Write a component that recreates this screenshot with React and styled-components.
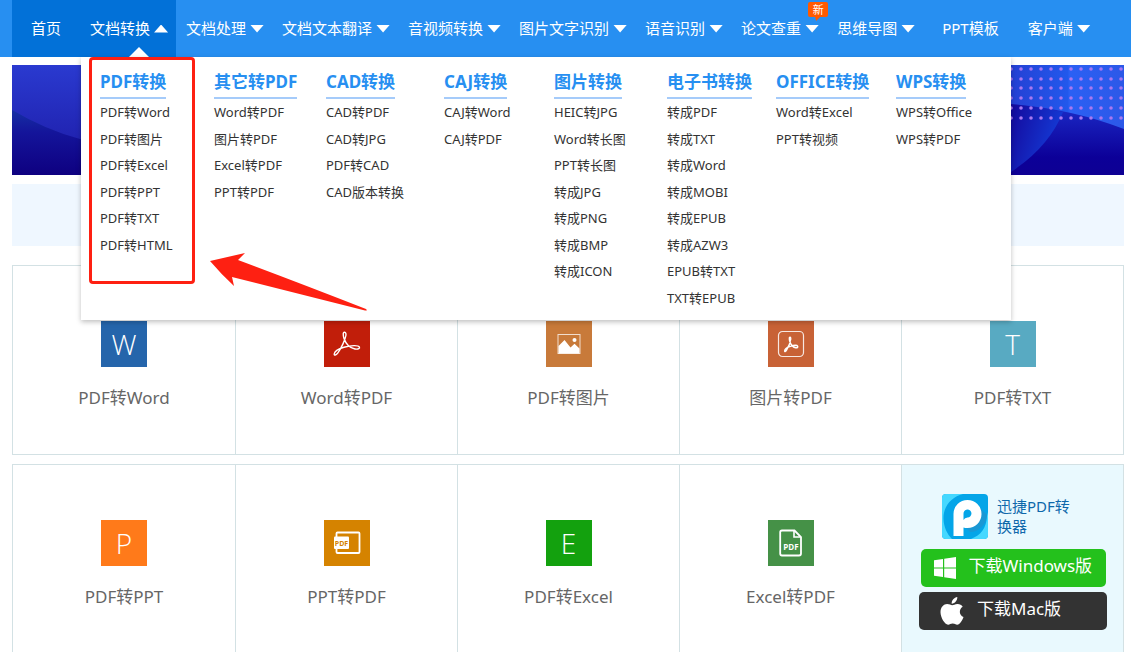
import React from 'react';
import styled, { createGlobalStyle } from 'styled-components';

const GlobalStyle = createGlobalStyle`
  *, *::before, *::after { box-sizing: border-box; }
  body {
    margin: 0;
    background: #fff;
    color: #333;
    font-family: "Noto Sans", "Noto Sans CJK SC", sans-serif;
  }
  ul { margin: 0; padding: 0; list-style: none; }
  a { color: inherit; text-decoration: none; }
  h2, p { margin: 0; }
`;

const Page = styled.div`
  position: relative;
  height: 100vh;
  overflow: hidden;
`;

const NavBar = styled.header`
  position: relative;
  height: 57px;
  padding: 0 7px 0 12px;
  background: #278ff1;
`;

const NavList = styled.ul`
  display: flex;
  height: 100%;
`;

const NavItem = styled.li`
  position: relative;
  flex: none;
  background: ${p => (p.$active ? '#0271d8' : 'transparent')};
`;

const NavLink = styled.a`
  display: flex;
  align-items: center;
  gap: 4px;
  height: 100%;
  padding: ${p => (p.$plain ? '0 19px 2px' : '0 8px 2px 10px')};
  color: #fff;
  font-size: 15px;
  line-height: 20px;
  white-space: nowrap;
`;

const Caret = styled.span`
  width: 14px;
  height: 8px;
  margin-top: 2px;
  background: #fff;
  clip-path: ${p => (p.$up ? 'polygon(50% 0, 100% 100%, 0 100%)' : 'polygon(0 0, 100% 0, 50% 100%)')};
`;

const Pointer = styled.span`
  position: absolute;
  left: 49px;
  bottom: 0;
  width: 20px;
  height: 10px;
  background: #fff;
  clip-path: polygon(50% 0, 100% 100%, 0 100%);
`;

const NewBadge = styled.span`
  position: absolute;
  top: 2px;
  right: -1px;
  width: 20px;
  height: 15px;
  border-radius: 2px;
  background: #ff5a00;
  color: #fff;
  font-size: 11px;
  line-height: 15px;
  text-align: center;

  &::after {
    content: "";
    position: absolute;
    left: 7px;
    top: 15px;
    width: 5px;
    height: 4px;
    background: #ff5a00;
    clip-path: polygon(0 0, 100% 0, 20% 100%);
  }
`;

const MegaMenu = styled.nav`
  position: absolute;
  z-index: 2;
  top: 57px;
  left: 81px;
  display: grid;
  grid-template-columns: 114px 112px 118px 110px 113px 109px 120px auto;
  width: 930px;
  padding: 12px 19px 9px;
  background: #fff;
  box-shadow: 0 2px 5px rgba(0, 0, 0, 0.25);
`;

const MenuTitle = styled.h2`
  width: max-content;
  height: 30px;
  border-bottom: 2px solid #a5cbfa;
  color: #278ff1;
  font-size: 17px;
  font-weight: 700;
  line-height: 26px;
`;

const MenuList = styled.ul`
  display: grid;
  grid-template-rows: repeat(8, 1fr);
  height: 212px;
  font-size: 13px;
`;

const MenuItem = styled.li`
  display: flex;
  align-items: center;
  line-height: 20px;
  white-space: nowrap;
`;

const Highlight = styled.div`
  position: absolute;
  top: 0;
  left: 8px;
  width: 106px;
  height: 227px;
  border: 3px solid #fe2012;
  border-radius: 4px;
  pointer-events: none;
`;

const Arrow = styled.svg`
  position: absolute;
  top: 193px;
  left: 128px;
  pointer-events: none;
`;

const Main = styled.main`
  padding: 8px 7px 0 12px;
`;

const Banner = styled.div`
  display: flex;
  justify-content: space-between;
  height: 110px;
  background: linear-gradient(#2634c8, #100080);
`;

const NoticeBar = styled.div`
  height: 62px;
  margin: 9px 0 19px;
  background: #eff7ff;
`;

const CardRow = styled.div`
  display: grid;
  grid-template-columns: repeat(5, 1fr);
  min-height: 190px;
  margin-bottom: 9px;
  border: 1px solid #d3e1e4;
`;

const Card = styled.a`
  display: flex;
  flex-direction: column;
  align-items: center;
  padding-top: 55px;
  color: #666;

  & + & { border-left: 1px solid #d3e1e4; }
`;

const Tile = styled.span`
  display: flex;
  align-items: center;
  justify-content: center;
  width: 46px;
  height: 46px;
  background: ${p => p.$color};
  color: #fff;
  font-family: "Open Sans", sans-serif;
  font-size: 28px;
  font-weight: 300;
  line-height: 44px;
`;

const CardLabel = styled.span`
  margin-top: 18px;
  font-size: 17px;
  line-height: 26px;
`;

const DownloadCard = styled.section`
  display: flex;
  flex-direction: column;
  align-items: center;
  gap: 5px;
  padding: 29px 16px 0 17px;
  border-left: 1px solid #d3e1e4;
  background: #e9f9fe;
`;

const Product = styled.div`
  display: flex;
  align-self: stretch;
  gap: 9px;
  padding: 0 24px 5px 23px;
`;

const ProductName = styled.p`
  flex: 1;
  padding-top: 2px;
  color: #0e68ab;
  font-size: 15px;
  line-height: 20px;
`;

const DownloadButton = styled.button`
  display: flex;
  align-items: center;
  gap: 13px;
  width: ${p => p.$width};
  height: 38px;
  padding: 0 0 0 ${p => p.$inset};
  border: 0;
  border-radius: 5px;
  background: ${p => p.$color};
  color: #fff;
  font: inherit;
  font-size: 17px;
  line-height: 24px;
  white-space: nowrap;

  span { padding-bottom: 4px; }
`;

const NAV = [
  { text: '首页', plain: true, active: true },
  { text: '文档转换', active: true, open: true },
  { text: '文档处理' },
  { text: '文档文本翻译' },
  { text: '音视频转换' },
  { text: '图片文字识别' },
  { text: '语音识别' },
  { text: '论文查重', badge: '新' },
  { text: '思维导图' },
  { text: 'PPT模板', plain: true },
  { text: '客户端' },
];

const MENU = [
  ['PDF转换', ['PDF转Word', 'PDF转图片', 'PDF转Excel', 'PDF转PPT', 'PDF转TXT', 'PDF转HTML']],
  ['其它转PDF', ['Word转PDF', '图片转PDF', 'Excel转PDF', 'PPT转PDF']],
  ['CAD转换', ['CAD转PDF', 'CAD转JPG', 'PDF转CAD', 'CAD版本转换']],
  ['CAJ转换', ['CAJ转Word', 'CAJ转PDF']],
  ['图片转换', ['HEIC转JPG', 'Word转长图', 'PPT转长图', '转成JPG', '转成PNG', '转成BMP', '转成ICON']],
  ['电子书转换', ['转成PDF', '转成TXT', '转成Word', '转成MOBI', '转成EPUB', '转成AZW3', 'EPUB转TXT', 'TXT转EPUB']],
  ['OFFICE转换', ['Word转Excel', 'PPT转视频']],
  ['WPS转换', ['WPS转Office', 'WPS转PDF']],
];

const AcrobatPath = ({ width }) => (
  <path
    d="M11.6 1.2C9.8 1 10 4.500 11 7.500C12.600 12 16.500 17 22 18C25.500 18.600 27 17.300 26.400 16C25.300 13.900 18 14.300 11 16.200C5.500 17.800 1.500 20.500 1.200 23C1.100 24.600 3 24.500 4.700 22.200C8.500 17 12.200 8.500 12.900 4.500C13.200 2.500 12.700 1.300 11.600 1.200Z"
    fill="none"
    stroke="#fff"
    strokeWidth={width}
    strokeLinejoin="round"
  />
);

const AcrobatIcon = () => (
  <svg width="28" height="26" viewBox="0 0 28 26" aria-hidden="true">
    <AcrobatPath width="1.4" />
  </svg>
);

const ImageIcon = () => (
  <svg width="24" height="24" viewBox="0 0 24 24" aria-hidden="true">
    <rect x="1" y="2.500" width="22" height="19" fill="none" stroke="#fff" strokeOpacity=".75" />
    <path d="M1.500 21.500V14L7.500 8L13.500 15.500L17.500 11.800L22.500 16.500V21.500Z" fill="#fff" />
    <circle cx="17.500" cy="8" r="2" fill="#fff" />
  </svg>
);

const FramedAcrobatIcon = () => (
  <svg width="28" height="28" viewBox="0 0 28 28" aria-hidden="true">
    <rect x="1.500" y="1.500" width="25" height="25" rx="4" fill="none" stroke="#fff" strokeOpacity=".85" strokeWidth="1.200" />
    <g transform="translate(7 6.500) scale(.52 .62)">
      <AcrobatPath width="2.600" />
    </g>
  </svg>
);

const SlidePdfIcon = () => (
  <svg width="28" height="26" viewBox="0 0 28 26" aria-hidden="true">
    <rect x="3.500" y="2.500" width="23" height="20.500" rx="1" fill="none" stroke="#fff" strokeWidth="1.800" />
    <rect x="1" y="6.500" width="15" height="12.500" rx="1" fill="#fff" />
    <text x="8.500" y="15.500" textAnchor="middle" fontFamily="Open Sans" fontSize="7" fontWeight="700" fill="#d58300">PDF</text>
  </svg>
);

const FilePdfIcon = () => (
  <svg width="24" height="28" viewBox="0 0 24 28" aria-hidden="true">
    <path d="M3 1.500H15.500L22 8V24.500Q22 26.500 20 26.500H3Q1.200 26.500 1.200 24.500V3.300Q1.200 1.500 3 1.500Z" fill="none" stroke="#fff" strokeWidth="1.800" />
    <path d="M15 2V8H21.500" fill="none" stroke="#fff" strokeWidth="1.600" />
    <text x="12" y="20.500" textAnchor="middle" fontFamily="Open Sans" fontSize="8" fontWeight="700" fill="#fff">PDF</text>
  </svg>
);

const ProductLogo = () => (
  <svg width="46" height="45" viewBox="0 0 46 45" aria-hidden="true">
    <defs>
      <clipPath id="logoClip"><rect width="46" height="45" rx="4" /></clipPath>
    </defs>
    <g clipPath="url(#logoClip)">
      <rect width="46" height="45" fill="#04a5e8" />
      <path d="M0 0H21C9 3 1 13 1.500 25C1.800 33 5 40 10 45H0Z" fill="#45d8ff" />
      <path d="M46 45H29C39 41 44.500 34 45 22L46 18Z" fill="#45d8ff" />
      <path d="M37 13L45 21C44 31 37 38 28 38L21 31Z" fill="#1a98d4" />
      <path d="M11.500 42V20A14 14 0 1 1 25.500 34Q23 34 21.500 33.500V42Z" fill="#fff" />
      <path d="M21.500 26V20A4 4 0 1 1 25.500 23.500Q22.800 23.500 21.500 26Z" fill="#04a5e8" />
    </g>
  </svg>
);

const WindowsLogo = () => (
  <svg width="22" height="22" viewBox="0 0 22 22" fill="#fff" aria-hidden="true">
    <path d="M0 3.200L9 1.900V10.400H0ZM10.200 1.700L22 0V10.400H10.200ZM0 11.600H9V20.100L0 18.800ZM10.200 11.600H22V22L10.200 20.300Z" />
  </svg>
);

const AppleLogo = () => (
  <svg width="24" height="28" viewBox="0 0 24 28" fill="#fff" aria-hidden="true">
    <path d="M17.300 0C17.500 3.400 14.800 6.600 11.700 6.700C11.300 3.500 14.300 .4 17.300 0Z" />
    <path d="M12.200 8.300C13.500 8.300 15.100 6.900 17.600 7C19.800 7.100 21.600 8.100 22.700 9.700C18.500 12.300 19.100 18.200 23.500 20C22.500 22.900 19.900 27.700 17.200 27.700C15.400 27.700 14.800 26.600 12.700 26.600C10.500 26.600 9.800 27.700 8.200 27.700C4.900 27.900 .5 20.500 .5 15.300C.5 10.100 3.800 7.200 7.100 7.100C9.300 7.100 11 8.300 12.200 8.300Z" />
  </svg>
);

const BannerLeft = () => (
  <svg width="120" height="110" viewBox="0 0 120 110" aria-hidden="true">
    <defs>
      <linearGradient id="leftTop" x1="0" y1="0" x2="0" y2="1">
        <stop offset="0" stopColor="#2a3ad0" />
        <stop offset="1" stopColor="#1c18a2" />
      </linearGradient>
      <linearGradient id="leftBottom" x1="0" y1="0" x2="0" y2="1">
        <stop offset="0" stopColor="#1530a4" />
        <stop offset=".35" stopColor="#14149a" />
        <stop offset="1" stopColor="#0e0080" />
      </linearGradient>
    </defs>
    <rect width="120" height="110" fill="url(#leftTop)" />
    <path d="M0 45Q34 65 68 74L120 84V110H0Z" fill="url(#leftBottom)" />
  </svg>
);

const dots = [];
for (let row = 0; row < 6; row += 1) {
  for (let col = 0; col < 12; col += 1) {
    dots.push([col * 10, 4 + row * 10 - (row > 1 ? 1 : 0)]);
  }
}

const BannerRight = () => (
  <svg width="113" height="110" viewBox="0 0 113 110" aria-hidden="true">
    <defs>
      <linearGradient id="rightTop" x1="0" y1="0" x2="1" y2="0">
        <stop offset="0" stopColor="#2440d4" />
        <stop offset=".5" stopColor="#2258ec" />
        <stop offset=".52" stopColor="#2b60f4" />
        <stop offset="1" stopColor="#2c58e8" />
      </linearGradient>
      <linearGradient id="rightBottom" x1="0" y1="0" x2="0" y2="1">
        <stop offset="0" stopColor="#1c2cc8" />
        <stop offset=".75" stopColor="#0c0098" />
        <stop offset="1" stopColor="#0e0094" />
      </linearGradient>
      <linearGradient id="wave" x1="0" y1=".2" x2="1" y2=".6">
        <stop offset="0" stopColor="#140ca0" />
        <stop offset="1" stopColor="#1440dc" />
      </linearGradient>
    </defs>
    <rect width="113" height="110" fill="url(#rightTop)" />
    <path d="M0 39Q62 44 113 64V110H0Z" fill="url(#rightBottom)" />
    <path d="M0 39Q28 42 52 47Q38 82 0 107Z" fill="url(#wave)" />
    {dots.map(([x, y]) => (
      <circle key={`${x}-${y}`} cx={x} cy={y} r="1.800" fill="#a878f0" />
    ))}
  </svg>
);

const ROW_ONE = [
  { label: 'PDF转Word', color: '#2565ab', icon: 'W' },
  { label: 'Word转PDF', color: '#c11e0a', icon: <AcrobatIcon /> },
  { label: 'PDF转图片', color: '#c87a3a', icon: <ImageIcon /> },
  { label: '图片转PDF', color: '#c86236', icon: <FramedAcrobatIcon /> },
  { label: 'PDF转TXT', color: '#58aac2', icon: 'T' },
];

const ROW_TWO = [
  { label: 'PDF转PPT', color: '#ff7a1a', icon: 'P' },
  { label: 'PPT转PDF', color: '#d58300', icon: <SlidePdfIcon /> },
  { label: 'PDF转Excel', color: '#13a10e', icon: 'E' },
  { label: 'Excel转PDF', color: '#459147', icon: <FilePdfIcon /> },
];

const ToolCard = ({ item }) => (
  <Card href="#">
    <Tile $color={item.color}>{item.icon}</Tile>
    <CardLabel>{item.label}</CardLabel>
  </Card>
);

export default function App() {
  return (
    <Page>
      <GlobalStyle />
      <NavBar>
        <NavList>
          {NAV.map(item => (
            <NavItem key={item.text} $active={item.active}>
              <NavLink href="#" $plain={item.plain}>
                {item.text}
                {!item.plain && <Caret $up={item.open} />}
              </NavLink>
              {item.open && <Pointer />}
              {item.badge && <NewBadge>{item.badge}</NewBadge>}
            </NavItem>
          ))}
        </NavList>
      </NavBar>
      <MegaMenu>
        {MENU.map(([title, items]) => (
          <section key={title}>
            <MenuTitle>{title}</MenuTitle>
            <MenuList>
              {items.map(text => (
                <MenuItem key={text}><a href="#">{text}</a></MenuItem>
              ))}
            </MenuList>
          </section>
        ))}
        <Highlight />
        <Arrow width="160" height="62" viewBox="0 0 160 62" aria-hidden="true">
          <path d="M1 11L36 3L29 10Q88 32 157 59Q159 61 156 60.500L23 27L25 36Q12 24 1 11Z" fill="#fe2012" />
        </Arrow>
      </MegaMenu>
      <Main>
        <Banner>
          <BannerLeft />
          <BannerRight />
        </Banner>
        <NoticeBar />
        <CardRow>
          {ROW_ONE.map(item => <ToolCard key={item.label} item={item} />)}
        </CardRow>
        <CardRow>
          {ROW_TWO.map(item => <ToolCard key={item.label} item={item} />)}
          <DownloadCard>
            <Product>
              <ProductLogo />
              <ProductName>迅捷PDF转换器</ProductName>
            </Product>
            <DownloadButton type="button" $color="#24c11c" $width="185px" $inset="13px">
              <WindowsLogo />
              <span>下载Windows版</span>
            </DownloadButton>
            <DownloadButton type="button" $color="#333333" $width="100%" $inset="21px">
              <AppleLogo />
              <span>下载Mac版</span>
            </DownloadButton>
          </DownloadCard>
        </CardRow>
      </Main>
    </Page>
  );
}
